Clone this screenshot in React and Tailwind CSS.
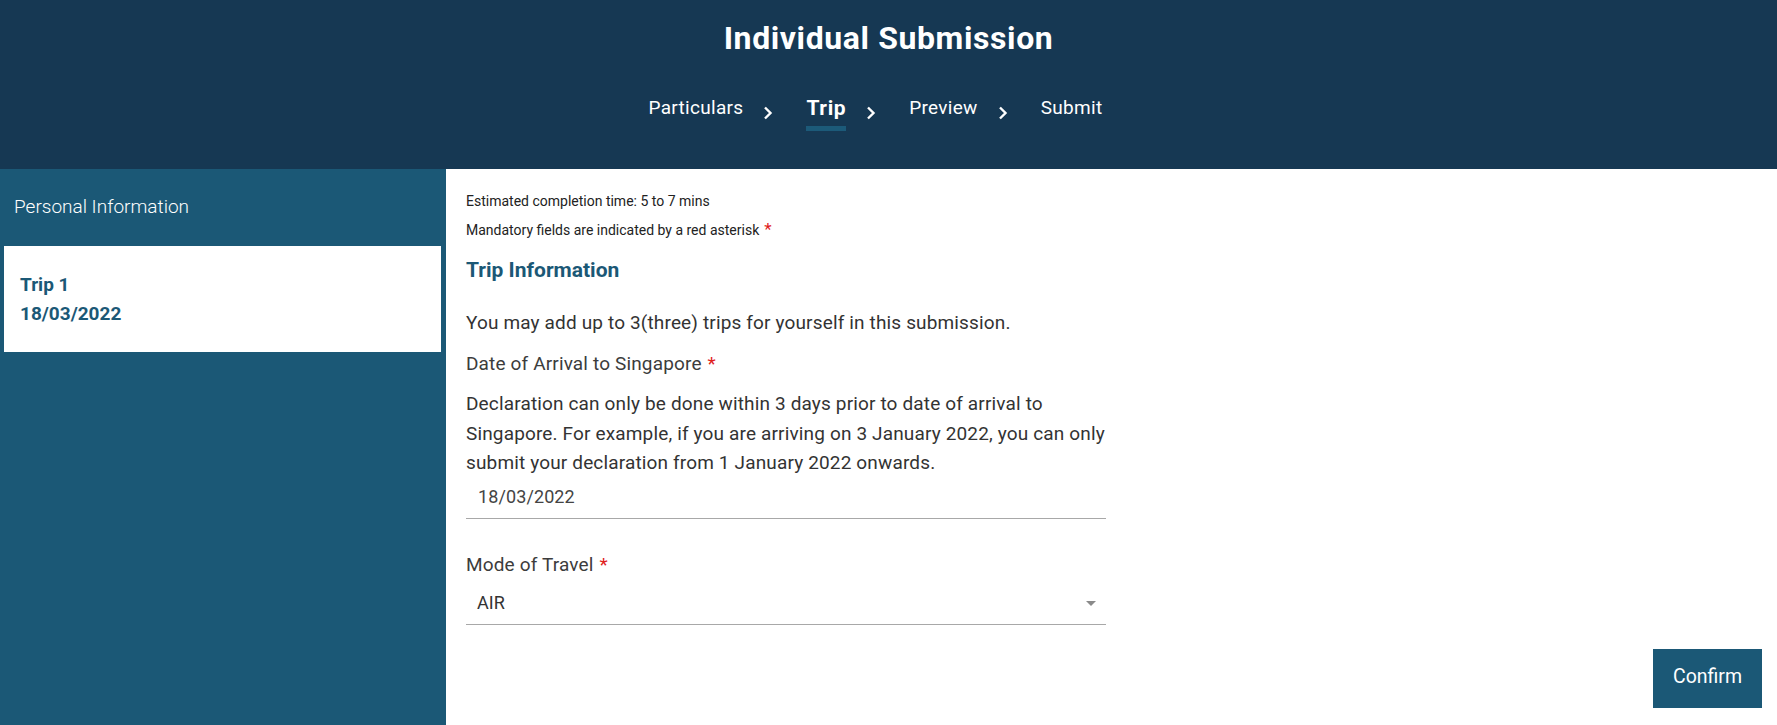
import React from "react";

const Chevron = () => (
  <svg width="10" height="14" viewBox="0 0 10 14" className="mt-[10px]">
    <path d="M2 1.5 L7.5 7 L2 12.5" fill="none" stroke="white" strokeWidth="2.4" />
  </svg>
);

const Req = () => <span className="text-[#e0201b] ml-[6px]">*</span>;

export default function App() {
  const steps = [
    { label: "Particulars" },
    { label: "Trip", active: true },
    { label: "Preview" },
    { label: "Submit" },
  ];

  return (
    <div className="min-h-screen flex flex-col bg-white" style={{ fontFamily: "Roboto, 'Noto Sans', sans-serif" }}>
      {/* Header */}
      <header className="h-[169px] bg-[#163853] flex flex-col items-center shrink-0">
        <h1 className="mt-[20px] text-[32px] leading-[36px] font-bold text-white tracking-[0.6px]">
          Individual Submission
        </h1>
        <nav className="mt-[40px] pr-[26px] flex items-start text-white text-[19px] leading-[24px]">
          {steps.map((s, i) => (
            <React.Fragment key={s.label}>
              <div className="flex flex-col items-center">
                <span className={s.active ? "font-bold text-[21px] tracking-[0.6px]" : "font-normal tracking-[0.3px]"}>
                  {s.label}
                </span>
                {s.active && <span className="mt-[6px] h-[5px] w-full bg-[#1c5a79]" />}
              </div>
              {i < steps.length - 1 && (
                <span className="ml-[20px] mr-[33px] flex">
                  <Chevron />
                </span>
              )}
            </React.Fragment>
          ))}
        </nav>
      </header>

      <div className="flex flex-1">
        {/* Sidebar */}
        <aside className="w-[446px] bg-[#1b5876] shrink-0">
          <div className="h-[77px] pl-[14px] pt-[24px] text-white text-[19px] font-light">
            Personal Information
          </div>
          <div className="mx-[4px] w-[437px] h-[106px] bg-white pl-[16px] pt-[24px] text-[#1b5876] text-[19px] font-bold leading-[29px]">
            <div>Trip 1</div>
            <div>18/03/2022</div>
          </div>
        </aside>

        {/* Main */}
        <main className="flex-1 flex flex-col text-[#333333]">
          <div className="w-[640px] ml-[20px] pt-[18px]">
            <p className="text-[14px] leading-[28px] text-[#222]">Estimated completion time: 5 to 7 mins</p>
            <p className="text-[14px] leading-[28px] text-[#222]">
              Mandatory fields are indicated by a red asterisk
              <span className="text-[#e0201b] ml-[5px] text-[17px]">*</span>
            </p>
            <h2 className="mt-[12px] text-[21px] leading-[28px] font-bold text-[#1b5876]">
              Trip Information
            </h2>
            <p className="mt-[24px] text-[19px] leading-[30px] tracking-[0.15px]">
              You may add up to 3(three) trips for yourself in this submission.
            </p>
            <p className="mt-[11px] text-[19px] leading-[30px] tracking-[0.15px] text-[#3c3c3c]">
              Date of Arrival to Singapore<Req />
            </p>
            <p className="mt-[10px] text-[19px] leading-[29.5px] tracking-[0.15px]">
              Declaration can only be done within 3 days prior to date of arrival to Singapore. For example, if you are arriving on 3 January 2022, you can only submit your declaration from 1 January 2022 onwards.
            </p>
            <div className="h-[41px] border-b border-[#a8a8a8] pl-[12px] pt-[5px] text-[18px] leading-[28px] text-[#444] tracking-[0.1px]">
              18/03/2022
            </div>
            <p className="mt-[31px] text-[19px] leading-[30px] tracking-[0.15px] text-[#3c3c3c]">
              Mode of Travel<Req />
            </p>
            <div className="h-[45px] border-b border-[#a8a8a8] pl-[11px] pr-[10px] pt-[9px] flex justify-between text-[18px] leading-[28px] text-[#333] tracking-[0.1px]">
              <span>AIR</span>
              <svg width="10" height="6" viewBox="0 0 10 6" className="mt-[12px]">
                <path d="M0 0 L10 0 L5 5 Z" fill="#8a8a8a" />
              </svg>
            </div>
          </div>
          <div className="flex justify-end pr-[15px] mt-[24px]">
            <button className="w-[109px] h-[59px] bg-[#1b5876] text-white text-[19.5px] pb-[3px]">Confirm</button>
          </div>
        </main>
      </div>
    </div>
  );
}
